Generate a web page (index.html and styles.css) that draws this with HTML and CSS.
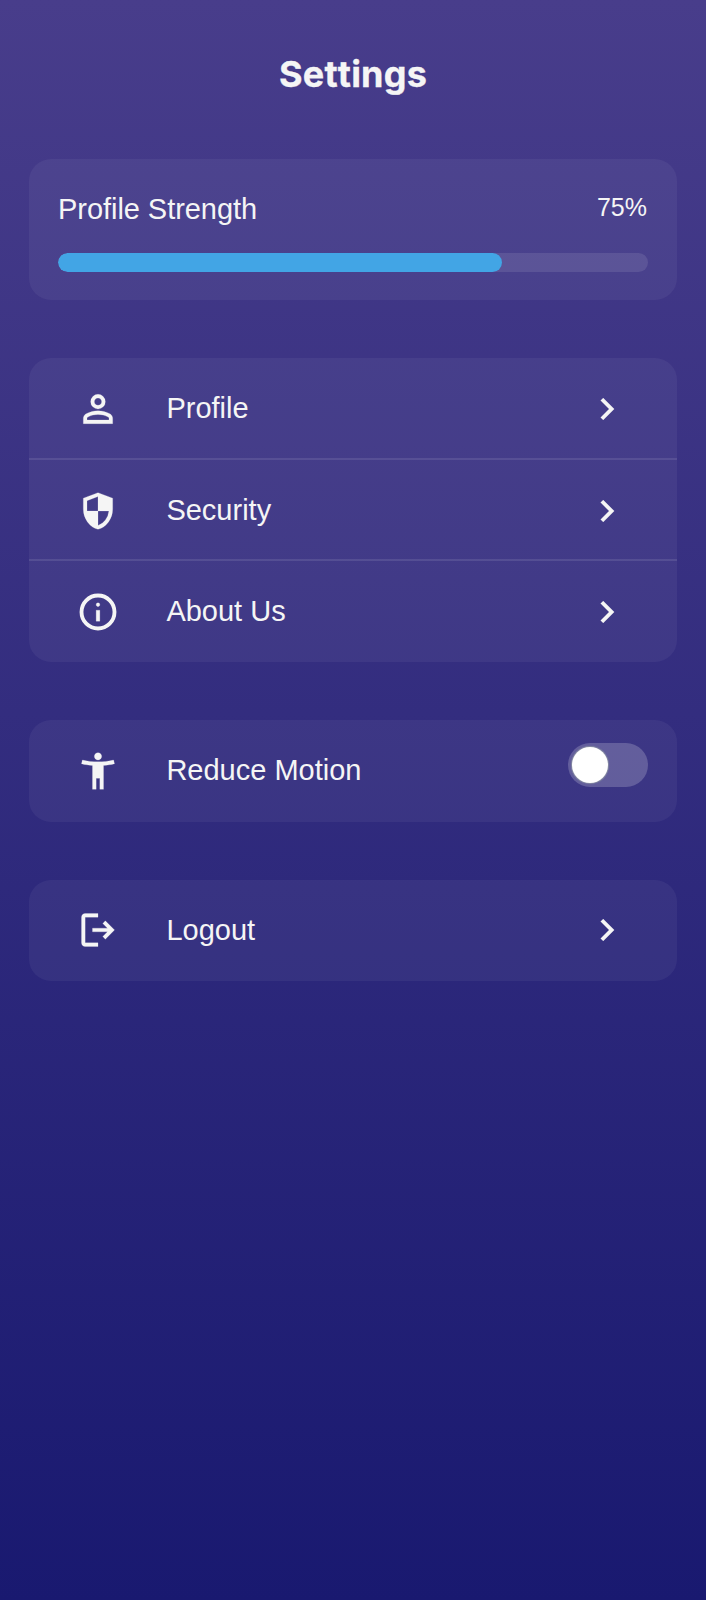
FILE: index.html
```html
<!DOCTYPE html>
<html lang="en">
<head>
<meta charset="utf-8">
<title>Settings</title>
<link rel="stylesheet" href="styles.css">
</head>
<body>
<main class="screen">
  <h1 class="title">Settings</h1>

  <section class="card strength">
    <div class="strength-head">
      <span class="strength-label">Profile Strength</span>
      <span class="strength-value">75%</span>
    </div>
    <div class="track"><div class="fill"></div></div>
  </section>

  <nav class="card">
    <a class="row row-first">
      <svg class="icon" viewBox="0 0 24 24"><path d="M12 12q-1.65 0-2.825-1.175T8 8t1.175-2.825T12 4t2.825 1.175T16 8t-1.175 2.825T12 12m-8 8v-2.8q0-.85.438-1.562T5.6 14.55q1.55-.775 3.15-1.162T12 13t3.25.388 3.15 1.162q.725.375 1.163 1.088T20 17.2V20zm2-2h12v-.8q0-.275-.137-.5t-.363-.35q-1.35-.675-2.725-1.012T12 15t-2.775.338T6.5 16.35q-.225.125-.363.35T6 17.2zm6-8q.825 0 1.413-.587T14 8t-.587-1.412T12 6t-1.412.588T10 8t.588 1.413T12 10"/></svg>
      <span class="label">Profile</span>
      <svg class="icon" viewBox="0 0 24 24"><path d="M12.6 12 8 7.4 9.4 6l6 6-6 6L8 16.6z"/></svg>
    </a>
    <a class="row">
      <svg class="icon" viewBox="0 0 24 24"><path d="M12 22q-3.475-.875-5.738-3.988T4 11.1V5l8-3 8 3v6.1q0 3.8-2.262 6.913T12 22m0-2.1q2.425-.75 4.05-2.963T17.95 12H12V4.125l-6 2.25v5.175q0 .175.05.45H12z"/></svg>
      <span class="label">Security</span>
      <svg class="icon" viewBox="0 0 24 24"><path d="M12.6 12 8 7.4 9.4 6l6 6-6 6L8 16.6z"/></svg>
    </a>
    <a class="row">
      <svg class="icon" viewBox="0 0 24 24"><path d="M11 17h2v-6h-2zm1-8q.425 0 .713-.288T13 8t-.288-.712T12 7t-.712.288T11 8t.288.713T12 9"/><circle class="ring" cx="12" cy="12" r="9"/></svg>
      <span class="label">About Us</span>
      <svg class="icon" viewBox="0 0 24 24"><path d="M12.6 12 8 7.4 9.4 6l6 6-6 6L8 16.6z"/></svg>
    </a>
  </nav>

  <section class="card">
    <div class="row row-toggle">
      <svg class="icon" viewBox="0 0 24 24"><path d="M12 6q-.825 0-1.412-.587T10 4t.588-1.412T12 2t1.413.588T14 4t-.587 1.413T12 6M9 22V9q-1.5-.125-3.05-.375T3 8l.5-2q1.95.525 4.15.763T12 7t4.35-.238T20.5 6l.5 2q-1.4.375-2.95.625T15 9v13h-2v-6h-2v6z"/></svg>
      <span class="label">Reduce Motion</span>
      <span class="switch"><span class="knob"></span></span>
    </div>
  </section>

  <nav class="card">
    <a class="row">
      <svg class="icon" viewBox="0 0 24 24"><path d="M5 21q-.825 0-1.412-.587T3 19V5q0-.825.588-1.412T5 3h7v2H5v14h7v2zm11-4-1.375-1.45 2.55-2.55H9v-2h8.175l-2.55-2.55L16 7l5 5z"/></svg>
      <span class="label">Logout</span>
      <svg class="icon" viewBox="0 0 24 24"><path d="M12.6 12 8 7.4 9.4 6l6 6-6 6L8 16.6z"/></svg>
    </a>
  </nav>
</main>
</body>
</html>
```
FILE: styles.css
```css
* {
  box-sizing: border-box;
}

body {
  margin: 0;
  color: #f5f5f5;
  font-family: "Liberation Sans", Arial, sans-serif;
  font-size: 29px;
}

.screen {
  display: flex;
  flex-direction: column;
  gap: 58px;
  min-height: 1600px;
  padding: 52px 29px 0;
  background: linear-gradient(#483d8b, #191970);
}

.title {
  margin: 0 0 5px;
  font-family: Inter, sans-serif;
  font-size: 36px;
  font-weight: 700;
  line-height: 44px;
  letter-spacing: 0.2px;
  font-kerning: none;
  text-align: center;
  -webkit-text-stroke: 0.3px currentColor;
}

.card {
  overflow: hidden;
  border-radius: 22px;
  background: rgba(255, 255, 255, 0.05);
}

.strength {
  height: 141px;
  padding: 33px 29px 29px;
}

.strength-head {
  display: flex;
  justify-content: space-between;
  align-items: flex-start;
  height: 61px;
}

.strength-label {
  line-height: 34px;
  letter-spacing: -0.05px;
}

.strength-value {
  padding-right: 1px;
  font-size: 25px;
  line-height: 30px;
}

.track {
  height: 19px;
  border-radius: 10px;
  overflow: hidden;
  background: rgba(255, 255, 255, 0.1);
}

.fill {
  width: 75.2%;
  height: 100%;
  border-radius: 10px;
  background: #42a5e5;
}

.row {
  display: flex;
  align-items: center;
  height: 101.2px;
  padding: 0 46.6px 0 47px;
}

.row-first {
  height: 102px;
}

.row-first .label {
  padding-bottom: 2px;
}

.row + .row {
  box-shadow: 0 -2px rgba(255, 255, 255, 0.1);
}

.row-toggle {
  padding-right: 29px;
}

.icon {
  width: 44px;
  height: 44px;
  flex: none;
  fill: currentColor;
  stroke: currentColor;
  stroke-width: 0.12;
}

.icon .ring {
  fill: none;
  stroke-width: 2.1;
}

.label {
  flex: 1;
  margin-left: 46.4px;
  line-height: 34px;
  padding-bottom: 1px;
}

.switch {
  display: flex;
  align-items: center;
  width: 80px;
  height: 44px;
  margin-bottom: 11px;
  padding: 0 4px;
  border-radius: 22px;
  background: rgba(255, 255, 255, 0.2);
}

.knob {
  width: 36px;
  height: 36px;
  border-radius: 50%;
  background: #fff;
  box-shadow: 0 0 1px 1px rgba(150, 160, 165, 0.7);
}
```
